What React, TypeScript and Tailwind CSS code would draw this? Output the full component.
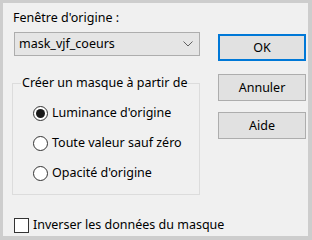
import React from "react";

function Radio({ checked, label, className = "" }: { checked?: boolean; label: string; className?: string }) {
  return (
    <div className={`flex items-center h-[16px] ${className}`}>
      <span className="w-[15px] h-[15px] rounded-full border border-[#333333] bg-white flex items-center justify-center">
        {checked && <span className="w-[9px] h-[9px] rounded-full bg-[#1a1a1a]" />}
      </span>
      <span className="ml-[4px] leading-[16px] whitespace-nowrap">{label}</span>
    </div>
  );
}

export default function App() {
  return (
    <div
      className="w-[312px] h-[240px] border-t-[3px] border-l-[3px] border-r-[4px] border-b-[4px] border-[#cdcdcd] bg-[#f0f0f0] text-[12.5px] text-black flex flex-col"
      style={{ fontFamily: '"Noto Sans", "Open Sans", sans-serif' }}
    >
      <div className="flex">
        <div className="flex flex-col pl-[9px] pt-[7px] w-[200px]">
          <div className="leading-[16px] h-[16px] ml-[1px] whitespace-nowrap">Fenêtre d'origine :</div>
          <div className="mt-[6px] ml-[2px] w-[186px] h-[24px] border border-[#adadad] bg-[#e5e5e5] flex items-center justify-between pl-[4px] pr-[5px]">
            <span className="leading-[16px]">mask_vjf_coeurs</span>
            <svg width="10" height="6" viewBox="0 0 10 6" className="mr-[1px]">
              <path d="M0.5 0.5 L5 5 L9.5 0.5" fill="none" stroke="#606060" strokeWidth="1" />
            </svg>
          </div>
          <fieldset className="mt-[19px] w-[188px] h-[120px] border border-[#dcdcdc] p-0 m-0 min-w-0">
            <legend className="ml-[8px] px-[1px] leading-[16px] whitespace-nowrap">Créer un masque à partir de</legend>
            <div className="flex flex-col pl-[20px] pt-[14px]">
              <Radio checked label="Luminance d'origine" />
              <Radio label="Toute valeur sauf zéro" className="mt-[14px]" />
              <Radio label="Opacité d'origine" className="mt-[14px]" />
            </div>
          </fieldset>
        </div>
        <div className="flex flex-col ml-[15px] pt-[31px]">
          <button className="w-[88px] h-[27px] border-2 border-[#0078d7] bg-[#e1e1e1] leading-[16px]">OK</button>
          <button className="mt-[13px] w-[88px] h-[27px] border border-[#adadad] bg-[#e1e1e1] leading-[16px]">Annuler</button>
          <button className="mt-[11px] w-[88px] h-[27px] border border-[#adadad] bg-[#e1e1e1] leading-[16px]">Aide</button>
        </div>
      </div>
      <div className="flex items-center mt-[22px] ml-[11px] h-[16px]">
        <span className="w-[15px] h-[15px] border border-[#333333] bg-white" />
        <span className="ml-[4px] leading-[16px] whitespace-nowrap">Inverser les données du masque</span>
      </div>
    </div>
  );
}
